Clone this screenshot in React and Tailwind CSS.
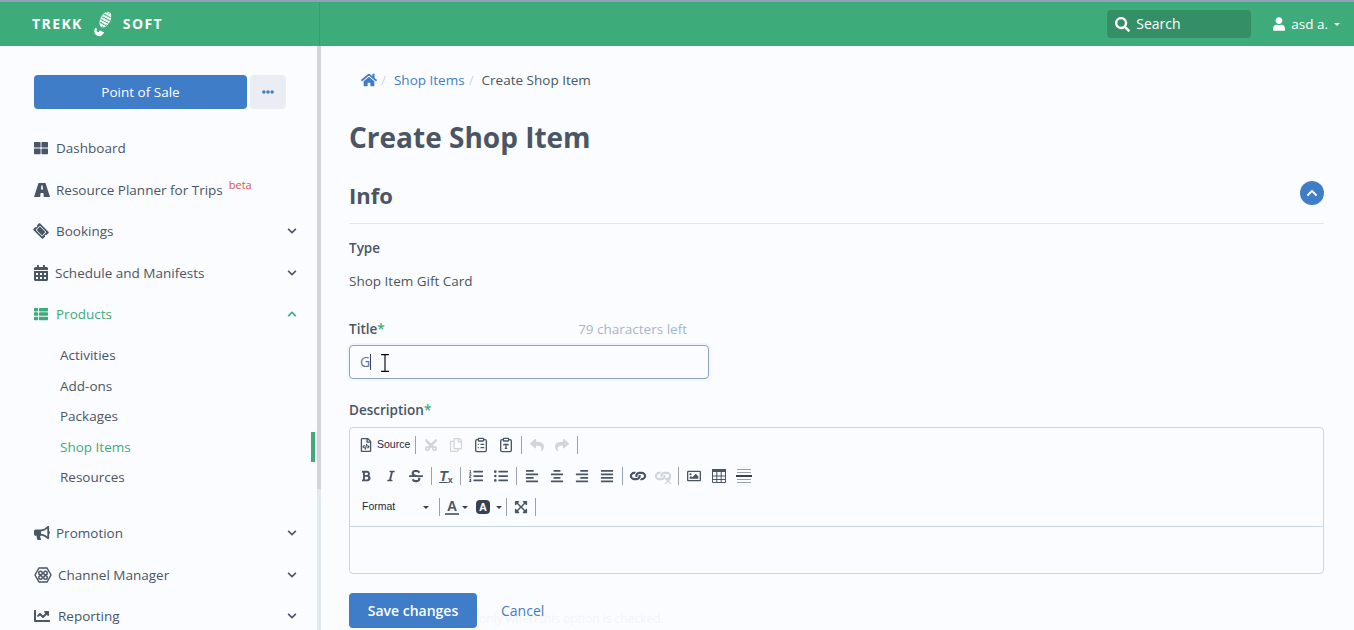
import React from "react";
import {
  FaThLarge, FaTicketAlt, FaCalendarAlt, FaThList, FaBullhorn, FaChartLine, FaHome,
  FaSearch, FaUser, FaChevronDown, FaChevronUp, FaEllipsisH, FaCut, FaRegCopy,
  FaReply, FaShare, FaBold, FaItalic, FaStrikethrough, FaListOl, FaListUl, FaAlignLeft,
  FaAlignCenter, FaAlignRight, FaAlignJustify, FaLink, FaRegImage, FaExpandArrowsAlt,
  FaRegFileCode,
} from "react-icons/fa";
import { ClipboardList, ClipboardType, X } from "lucide-react";

const Boot = () => (
  <svg viewBox="0 0 20 28" className="w-5 h-7">
    <g transform="rotate(28 10 14)">
      <ellipse cx="10" cy="9" rx="5" ry="8.5" fill="#fff" />
      <path d="M10 21 H15 C15 25 13 27 10 27 C7 27 5 25 5 21 H7 C7 24 9 24 10 23 Z" fill="#fff" />
      <g stroke="#3eab7a" strokeWidth="0.8">
        <path d="M6 5 H14 M5.5 8 H14.5 M5.5 11 H14.5 M6 14 H14" />
        <path d="M8 1 V16 M10.5 1 V17 M13 1 V16" strokeDasharray="1.5 1.5" />
      </g>
    </g>
  </svg>
);

const RoadIcon = () => (
  <svg viewBox="0 0 16 16" className="w-4 h-4" fill="currentColor">
    <path fillRule="evenodd" d="M4.5 1 H11.5 L16 15 H9.8 L9.4 11 H6.6 L6.2 15 H0 Z M7.3 3.5 H8.7 L9 7.5 H7 Z" />
  </svg>
);

const ChannelIcon = () => (
  <svg viewBox="0 0 18 16" className="w-4.5 h-4" fill="none" stroke="currentColor" strokeWidth="1.4">
    <path d="M5 1 H13 L17 8 L13 15 H5 L1 8 Z" />
    <circle cx="6.5" cy="6" r="1.8" />
    <circle cx="11.5" cy="6" r="1.8" />
    <circle cx="6.5" cy="10.5" r="1.8" />
    <circle cx="11.5" cy="10.5" r="1.8" />
  </svg>
);

const TableIcon = () => (
  <svg viewBox="0 0 14 14" className="w-3.5 h-3.5" fill="none" stroke="currentColor">
    <path d="M0 1.5 H14" strokeWidth="3" />
    <path d="M.5 0 V13.5 H13.5 V0 M0 7 H14 M0 10.5 H14 M4.8 3 V14 M9.2 3 V14" strokeWidth="1" />
  </svg>
);

const topItems = [
  { label: "Dashboard", icon: <FaThLarge className="w-3.5 h-3.5" />, gap: "w-5.5", space: "mb-0.5" },
  { label: "Resource Planner for Trips", icon: <RoadIcon />, gap: "w-5.5", beta: true, space: "mb-px" },
  { label: "Bookings", icon: <FaTicketAlt className="w-3.5 h-3.5 rotate-45" />, gap: "w-5.5", arrow: true, space: "mb-0.5" },
  { label: "Schedule and Manifests", icon: <FaCalendarAlt className="w-3.5 h-4" />, gap: "w-5.25", arrow: true, space: "mb-px" },
];

const subItems = [
  { label: "Activities", space: "mb-px" },
  { label: "Add-ons" },
  { label: "Packages", space: "mb-px" },
  { label: "Shop Items", active: true },
  { label: "Resources" },
];

const bottomItems = [
  { label: "Promotion", icon: <FaBullhorn className="w-4 h-4" />, gap: "w-5.5", space: "mb-0.5" },
  { label: "Channel Manager", icon: <ChannelIcon />, gap: "w-6", space: "mb-px" },
  { label: "Reporting", icon: <FaChartLine className="w-4 h-4" />, gap: "w-6" },
];

const NavRow = ({ item }) => (
  <a className={`flex items-center h-10 ${item.space || ""}`}>
    <span className={`${item.gap} shrink-0`}>{item.icon}</span>
    <span>{item.label}</span>
    {item.beta && <sup className="ml-1.5 text-[11px] text-[#d9534f]">beta</sup>}
    {item.arrow && <FaChevronDown className="ml-auto w-2.5 h-2.5" />}
  </a>
);

const Sidebar = () => (
  <aside className="relative w-[321px] shrink-0 pl-8.5 pr-6 pt-7.25">
    <div className="flex gap-0.75 mr-2.75">
      <button className="flex-1 h-8.5 rounded bg-[#3f7dc8] font-medium text-white">Point of Sale</button>
      <button className="w-9 h-8.5 rounded bg-slate-200/70 flex items-center justify-center text-[#3f7dc8]">
        <FaEllipsisH className="w-3 h-3" />
      </button>
    </div>
    <nav className="mt-4.75">
      {topItems.map((item) => <NavRow key={item.label} item={item} />)}
      <a className="flex items-center h-10 text-[#3eab7a]">
        <FaThList className="w-3.5 h-3.5 mr-2" />
        <span>Products</span>
        <FaChevronUp className="ml-auto w-2.5 h-2.5" />
      </a>
      <ul className="mt-1.5 pl-6.5">
        {subItems.map((sub) => (
          <li key={sub.label} className={`relative flex items-center h-7.5 ${sub.space || ""} ${sub.active ? "text-[#3eab7a]" : ""}`}>
            {sub.label}
            {sub.active && <span className="absolute -right-4.5 top-0 w-1 h-full bg-[#3eab7a]" />}
          </li>
        ))}
      </ul>
      <div className="mt-5.25">
        {bottomItems.map((item) => <NavRow key={item.label} item={{ ...item, arrow: true }} />)}
      </div>
    </nav>
    <div className="absolute right-0 top-0 bottom-0 w-1 bg-slate-200">
      <div className="w-full h-[443px] bg-zinc-300" />
    </div>
  </aside>
);

const Btn = ({ children, light, narrow }) => (
  <span className={`${narrow ? "w-5.5" : "w-6"} h-6 relative flex items-center justify-center ${light ? "text-gray-300" : "text-gray-600"}`}>{children}</span>
);
const Sep = () => <span className="w-px h-4.5 mx-0.5 bg-gray-400" />;
const Arrow = () => <span className="border-x-[3px] border-t-[3px] border-x-transparent border-t-gray-700" />;
const ic = "w-3.5 h-3.5";

const Toolbar = () => (
  <div className="pt-0.5 pb-1 px-1 border-b border-slate-300 font-['Liberation_Sans',sans-serif]">
    <div className="flex items-center gap-px h-7.5 mb-px">
      <Btn><FaRegFileCode className={ic} /></Btn>
      <span className="text-[10.5px] text-gray-800 -ml-0.5 mr-0.5">Source</span>
      <Sep />
      <Btn light><FaCut className={`${ic} -rotate-90`} /></Btn>
      <Btn light><FaRegCopy className={ic} /></Btn>
      <Btn><ClipboardList className="w-4 h-4" /></Btn>
      <Btn><ClipboardType className="w-4 h-4" /></Btn>
      <Sep />
      <Btn light><FaReply className={ic} /></Btn>
      <Btn light><FaShare className={ic} /></Btn>
      <Sep />
    </div>
    <div className="flex items-center gap-px h-7.5 mb-px">
      <Btn><FaBold className="w-3 h-3" /></Btn>
      <Btn><FaItalic className="w-3 h-3" /></Btn>
      <Btn><FaStrikethrough className={ic} /></Btn>
      <Sep />
      <Btn narrow>
        <span className="italic font-bold text-sm leading-none underline">T</span>
        <span className="text-[9px] font-bold leading-none mt-2">x</span>
      </Btn>
      <Sep />
      <Btn><FaListOl className={ic} /></Btn>
      <Btn><FaListUl className={ic} /></Btn>
      <Sep />
      <Btn><FaAlignLeft className={ic} /></Btn>
      <Btn><FaAlignCenter className={ic} /></Btn>
      <Btn><FaAlignRight className={ic} /></Btn>
      <Btn><FaAlignJustify className={ic} /></Btn>
      <Sep />
      <Btn><FaLink className={`${ic} rotate-45`} /></Btn>
      <Btn light>
        <FaLink className={`${ic} rotate-45`} />
        <X className="absolute right-0.5 bottom-0.5 w-2.5 h-2.5" strokeWidth={3} />
      </Btn>
      <Sep />
      <Btn><FaRegImage className={ic} /></Btn>
      <Btn><TableIcon /></Btn>
      <span className="w-6 h-6 flex flex-col items-center justify-center gap-0.5">
        <span className="w-3.5 h-px bg-gray-400" />
        <span className="w-3.5 h-px bg-gray-400" />
        <span className="w-4 h-0.5 bg-gray-700" />
        <span className="w-3.5 h-px bg-gray-400" />
        <span className="w-3.5 h-px bg-gray-400" />
      </span>
    </div>
    <div className="flex items-center h-7.5">
      <span className="w-20.75 pl-2 pr-2 flex items-center justify-between text-[10.5px] text-gray-800">
        Format
        <Arrow />
      </span>
      <Sep />
      <span className="w-5 flex flex-col items-center">
        <span className="text-sm font-bold text-gray-600 leading-none">A</span>
        <span className="w-3.5 h-0.5 bg-gray-500" />
      </span>
      <Arrow />
      <span className="w-2" />
      <span className="w-3.5 h-3.5 mr-1.5 rounded-sm bg-gray-700 text-white text-[11px] font-bold flex items-center justify-center">A</span>
      <Arrow />
      <span className="w-0.5" />
      <Sep />
      <Btn><FaExpandArrowsAlt className={ic} /></Btn>
      <Sep />
    </div>
  </div>
);

export default function App() {
  return (
    <div className="h-screen overflow-hidden bg-[#fbfcff] font-['Open_Sans',sans-serif] text-[13.5px] text-gray-600">
      <header className="flex h-11.5 border-t-2 border-slate-400 bg-[#3eab7a] text-white">
        <div className="w-80 shrink-0 border-r border-[#389c6f] pl-8 flex items-center">
          <span className="text-sm font-bold tracking-widest">TREKK</span>
          <span className="mx-2.5"><Boot /></span>
          <span className="text-sm font-bold tracking-widest">SOFT</span>
        </div>
        <div className="flex-1 flex items-center justify-end pr-3.5">
          <div className="w-36 h-7 rounded-sm bg-[#348f67] flex items-center pl-2">
            <FaSearch className="w-3.75 h-3.75" />
            <span className="ml-1.5 text-sm">Search</span>
          </div>
          <FaUser className="ml-5.5 w-3 h-3.5" />
          <span className="ml-1.5">asd a.</span>
          <span className="ml-1.5 border-x-[3px] border-t-[3px] border-x-transparent border-t-white" />
        </div>
      </header>

      <div className="flex">
        <Sidebar />
        <main className="flex-1 min-w-0 pl-7 pr-7.5 pt-6">
          <div className="flex items-center pl-3">
            <FaHome className="w-4 h-4 text-[#3f7dc8]" />
            <span className="ml-1 text-gray-300">/</span>
            <a className="ml-2 text-[#3f7dc8]">Shop Items</a>
            <span className="ml-1 text-gray-300">/</span>
            <span className="ml-2">Create Shop Item</span>
          </div>

          <h1 className="mt-7 text-[28px] leading-9.5 font-bold">Create Shop Item</h1>

          <div className="mt-6 pb-3.25 flex items-center justify-between border-b border-slate-200">
            <h2 className="text-[22px] leading-7.5 font-bold">Info</h2>
            <button className="mb-1 w-6 h-6 rounded-full bg-[#3f7dc8] flex items-center justify-center text-white">
              <FaChevronUp className="w-3 h-3" />
            </button>
          </div>

          <div className="mt-3.5 font-semibold">Type</div>
          <div className="mt-3">Shop Item Gift Card</div>

          <div className="mt-7 w-84.5 flex justify-between font-semibold">
            <span>Title<span className="text-[#3eab7a]">*</span></span>
            <span className="font-normal text-slate-400/80">79 characters left</span>
          </div>
          <div className="relative mt-1.5 w-90 h-8.5 rounded border border-slate-400 ring-2 ring-blue-50 flex items-center pl-2.5 text-sm text-slate-500">
            G<span className="w-px h-4 bg-slate-700" />
            <svg viewBox="0 0 9 16" className="absolute left-7.5 top-2 w-2.5 h-4.5 text-black" fill="none" stroke="currentColor" strokeWidth="1">
              <path d="M1 .5 H8 M4.5 .5 V15.5 M1 15.5 H8" />
            </svg>
          </div>

          <div className="mt-5.25 font-semibold">Description<span className="text-[#3eab7a]">*</span></div>
          <div className="mt-1.75 rounded border border-slate-300">
            <Toolbar />
            <div className="h-11.5" />
          </div>

          <div className="relative mt-4.75 flex items-center">
            <button className="relative z-10 w-32 h-8.75 rounded bg-[#3f7dc8] text-sm font-semibold text-white">Save changes</button>
            <a className="relative z-10 ml-6 text-sm text-[#3f7dc8]">Cancel</a>
            <span className="absolute left-6 top-4.5 text-xs text-slate-100">This item is shown only when this option is checked.</span>
          </div>
        </main>
      </div>
    </div>
  );
}
